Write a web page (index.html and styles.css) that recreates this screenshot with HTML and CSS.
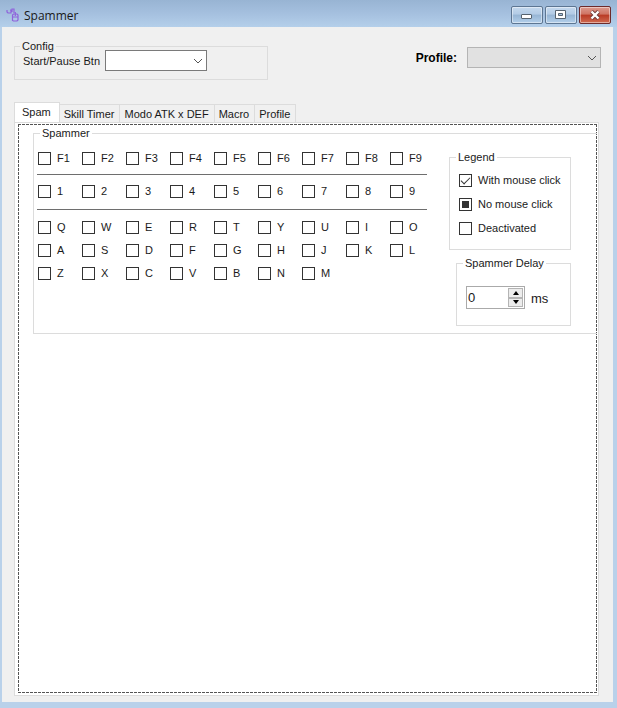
FILE: index.html
```html
<!DOCTYPE html>
<html lang="en">
<head>
    <meta charset="utf-8">
    <title>Spammer</title>
    <link rel="stylesheet" href="styles.css">
</head>
<body>
    <div class="window">
        <header class="titlebar">
            <svg class="titlebar__icon" width="14" height="14" viewBox="0 0 14 14" fill="none" stroke="#8f62dc" stroke-width="1.2">
                <path d="M1 2v2l1 1h3V2H4M6 4V1h2v4"/>
                <path d="M6.500 12.500V7l1-1h3.500l1 1v5l-1 1H7.500zM6.500 9h5.500M9.300 4v4"/>
            </svg>
            <h1>Spammer</h1>
            <button class="winbtn" aria-label="Minimize">
                <svg width="12" height="10" viewBox="0 0 12 10"><rect x="0.500" y="4.500" width="10" height="4" rx="0.500" fill="#fff" stroke="#56636f"/></svg>
            </button>
            <button class="winbtn" aria-label="Maximize">
                <svg width="12" height="10" viewBox="0 0 12 10"><path fill="#fff" stroke="#56636f" fill-rule="evenodd" d="M0.500 0.500h10v8h-10zM3.500 3.500v2h4v-2z"/></svg>
            </button>
            <button class="winbtn winbtn--close" aria-label="Close">
                <svg width="12" height="10" viewBox="0 0 12 10"><path d="M2.500 1.500l7 7M9.500 1.500l-7 7" stroke="#6b3a3a" stroke-width="4"/><path d="M2.500 1.500l7 7M9.500 1.500l-7 7" stroke="#fff" stroke-width="2.400"/></svg>
            </button>
        </header>

        <main class="client">
            <div class="top">
                <fieldset class="config">
                    <legend>Config</legend>
                    <div class="config__row">
                        <label for="start_btn">Start/Pause Btn</label>
                        <span class="combo">
                            <select id="start_btn"></select>
                            <svg width="10" height="6" viewBox="0 0 10 6"><path d="M1 1l4 4 4-4"/></svg>
                        </span>
                    </div>
                </fieldset>
                <div class="profile">
                    <label for="profile">Profile:</label>
                    <span class="combo combo--disabled">
                        <select id="profile" disabled></select>
                        <svg width="10" height="6" viewBox="0 0 10 6"><path d="M1 1l4 4 4-4"/></svg>
                    </span>
                </div>
            </div>

            <div class="tabs" role="tablist">
                <button class="tab tab--active" role="tab" aria-selected="true">Spam</button>
                <button class="tab" role="tab">Skill Timer</button>
                <button class="tab" role="tab">Modo ATK x DEF</button>
                <button class="tab" role="tab">Macro</button>
                <button class="tab" role="tab">Profile</button>
            </div>

            <section class="panel">
                <div class="page">
                    <fieldset class="spammer">
                        <legend>Spammer</legend>
                        <div class="keys">
                            <div class="keys__row">
                                <label><input type="checkbox">F1</label>
                                <label><input type="checkbox">F2</label>
                                <label><input type="checkbox">F3</label>
                                <label><input type="checkbox">F4</label>
                                <label><input type="checkbox">F5</label>
                                <label><input type="checkbox">F6</label>
                                <label><input type="checkbox">F7</label>
                                <label><input type="checkbox">F8</label>
                                <label><input type="checkbox">F9</label>
                            </div>
                            <hr>
                            <div class="keys__row">
                                <label><input type="checkbox">1</label>
                                <label><input type="checkbox">2</label>
                                <label><input type="checkbox">3</label>
                                <label><input type="checkbox">4</label>
                                <label><input type="checkbox">5</label>
                                <label><input type="checkbox">6</label>
                                <label><input type="checkbox">7</label>
                                <label><input type="checkbox">8</label>
                                <label><input type="checkbox">9</label>
                            </div>
                            <hr>
                            <div class="keys__row">
                                <label><input type="checkbox">Q</label>
                                <label><input type="checkbox">W</label>
                                <label><input type="checkbox">E</label>
                                <label><input type="checkbox">R</label>
                                <label><input type="checkbox">T</label>
                                <label><input type="checkbox">Y</label>
                                <label><input type="checkbox">U</label>
                                <label><input type="checkbox">I</label>
                                <label><input type="checkbox">O</label>
                                <label><input type="checkbox">A</label>
                                <label><input type="checkbox">S</label>
                                <label><input type="checkbox">D</label>
                                <label><input type="checkbox">F</label>
                                <label><input type="checkbox">G</label>
                                <label><input type="checkbox">H</label>
                                <label><input type="checkbox">J</label>
                                <label><input type="checkbox">K</label>
                                <label><input type="checkbox">L</label>
                                <label><input type="checkbox">Z</label>
                                <label><input type="checkbox">X</label>
                                <label><input type="checkbox">C</label>
                                <label><input type="checkbox">V</label>
                                <label><input type="checkbox">B</label>
                                <label><input type="checkbox">N</label>
                                <label><input type="checkbox">M</label>
                            </div>
                        </div>

                        <div class="side">
                            <fieldset class="help">
                                <legend>Legend</legend>
                                <label><input type="checkbox" checked>With mouse click</label>
                                <label><input type="checkbox" id="no_click">No mouse click</label>
                                <label><input type="checkbox">Deactivated</label>
                            </fieldset>
                            <fieldset class="delay">
                                <legend>Spammer Delay</legend>
                                <div class="spinner">
                                    <input type="number" id="delay" value="0" min="0">
                                    <div class="spinner__buttons">
                                        <button id="delay_up" aria-label="Increase"><svg width="6" height="4" viewBox="0 0 6 4"><path d="M0 4l3-4 3 4z"/></svg></button>
                                        <button id="delay_down" aria-label="Decrease"><svg width="6" height="4" viewBox="0 0 6 4"><path d="M0 0l3 4 3-4z"/></svg></button>
                                    </div>
                                </div>
                                <label for="delay">ms</label>
                            </fieldset>
                        </div>
                    </fieldset>
                </div>
            </section>
        </main>
    </div>

    <script>
        // third state can't be set from markup
        document.getElementById('no_click').indeterminate = true;

        var delay = document.getElementById('delay');
        document.getElementById('delay_up').addEventListener('click', function() {
            delay.stepUp();
        });
        document.getElementById('delay_down').addEventListener('click', function() {
            delay.stepDown();
        });
    </script>
</body>
</html>
```

FILE: styles.css
```css
*, ::after, ::before {
    box-sizing: border-box;
}

body {
    margin: 0;
    color: #1a1a1a;
    font-size: 11px;
    line-height: 13px;
    font-family: "Liberation Sans", Arial, sans-serif;
}

button, input, select {
    margin: 0;
    padding: 0;
    color: inherit;
    font: inherit;
    border-radius: 0;
}

.window {
    display: flex;
    flex-direction: column;
    min-height: 100vh;
    padding: 0 4px 6px 2px;
    background: #b9d1ea;
}

/* title bar */
.titlebar {
    display: flex;
    align-items: center;
    gap: 2px;
    height: 27px;
    margin: 0 -4px 0 -2px;
    padding: 3px 6px 0 6px;
    background: linear-gradient(#98b4d3, #a5c0df 50%, #b4cfea);
}

.titlebar h1 {
    flex: 1;
    margin: 0 0 0 2px;
    padding-top: 2px;
    font: 12px/16px "Open Sans", sans-serif;
}

.winbtn {
    display: flex;
    align-items: center;
    justify-content: center;
    width: 32px;
    height: 18px;
    border: 1px solid #5d7692;
    border-radius: 2px;
    background: linear-gradient(#c5d9ee, #b2cbe5 45%, #96b5d4 50%, #b3cfea);
    box-shadow: inset 0 0 0 1px rgba(255, 255, 255, .45);
}

.winbtn--close {
    border-color: #6d2a2a;
    background: linear-gradient(#dc9a8e, #cf7463 45%, #b93a24 50%, #cf6a50);
}

.client {
    flex: 1;
    display: flex;
    flex-direction: column;
    padding: 15px 14px 6px 12px;
    background: #f0f0f0;
}

/* group boxes */
fieldset {
    margin: 0;
    min-width: 0;
    border: 1px solid #dcdcdc;
    padding: 0 9px;
}

legend {
    margin-left: -3px;
    padding: 0 2px;
    line-height: 8px;
}

.top {
    display: flex;
    justify-content: space-between;
    align-items: flex-start;
}

.config {
    width: 254px;
    padding: 0 8px 8px;
}

.config__row {
    display: flex;
    align-items: center;
}

.config label {
    width: 82px;
    padding-top: 2px;
}

/* combo boxes */
.combo {
    display: grid;
    align-items: center;
    width: 102px;
}

.combo select, .combo svg {
    grid-area: 1 / 1;
}

.combo select {
    appearance: none;
    width: 100%;
    height: 21px;
    border: 1px solid #7a7a7a;
    background: #fff;
}

.combo svg {
    justify-self: end;
    margin-right: 4px;
    fill: none;
    stroke: #555;
    pointer-events: none;
}

.combo--disabled {
    width: 134px;
}

.combo--disabled select {
    border-color: #b4b4b4;
    background: #e1e1e1;
    opacity: 1;
}

.profile {
    display: flex;
    align-items: center;
    gap: 10px;
    margin: 5px -2px 0 0;
}

.profile label {
    padding-top: 2px;
    color: #000;
    font-size: 12px;
    font-weight: bold;
}

/* tabs */
.tabs {
    display: flex;
    align-items: flex-end;
    margin-top: 22px;
}

.tab {
    height: 18px;
    padding: 1px 5px 0 4px;
    border: 1px solid #dcdcdc;
    border-width: 1px 1px 0 0;
    background: #f0f0f0;
}

.tab--active {
    height: 21px;
    margin-bottom: -1px;
    padding: 0 8px 2px 7px;
    border-left-width: 1px;
    background: #fff;
}

.panel {
    flex: 1;
    display: flex;
    padding: 1px 1px 2px 3px;
    border: 1px solid #dcdcdc;
    background: #fff;
}

.page {
    --dash: #555 0 3px, transparent 3px 4px;
    flex: 1;
    padding: 5px 0 5px 15px;
    background:
        repeating-linear-gradient(90deg, var(--dash)) top / 100% 1px no-repeat,
        repeating-linear-gradient(90deg, var(--dash)) bottom / 100% 1px no-repeat,
        repeating-linear-gradient(var(--dash)) left / 1px 100% no-repeat,
        repeating-linear-gradient(var(--dash)) right / 1px 100% no-repeat;
}

.spammer {
    display: flex;
    gap: 22px;
    padding: 0 0 7px 3px;
    border-right: 0;
}

.spammer > legend {
    margin-left: 3px;
}

/* check boxes */
input[type="checkbox"] {
    appearance: none;
    display: grid;
    place-items: center;
    width: 13px;
    height: 13px;
    border: 1px solid #333;
    background: #fff;
}

input[type="checkbox"]:checked::before {
    content: "";
    width: 9px;
    height: 5px;
    margin-top: -3px;
    border: solid #333;
    border-width: 0 0 1px 1px;
    transform: rotate(-45deg);
}

input[type="checkbox"]:indeterminate::before {
    content: "";
    width: 7px;
    height: 7px;
    background: #333;
}

.keys {
    width: 390px;
    padding-top: 15px;
}

.keys__row {
    display: grid;
    grid-template-columns: repeat(9, 44px);
    row-gap: 10px;
    padding-left: 1px;
}

.keys__row label, .help label {
    display: flex;
    align-items: center;
    gap: 6px;
}

.keys hr {
    height: 1px;
    margin: 9px 0 10px;
    border: 0;
    background: #6e6e6e;
}

.keys hr ~ hr {
    margin: 11px 0;
}

.side {
    display: flex;
    flex-direction: column;
    align-items: flex-end;
    gap: 9px;
    width: 122px;
    padding-top: 16px;
}

.help {
    display: flex;
    flex-direction: column;
    gap: 11px;
    width: 100%;
    padding: 13px 0 14px 9px;
}

.delay {
    display: flex;
    align-items: center;
    gap: 6px;
    width: 115px;
    padding: 19px 9px 16px;
}

.delay label {
    padding-top: 1px;
    font-size: 13px;
}

.spinner {
    display: flex;
    width: 59px;
    height: 23px;
    padding: 1px;
    border: 1px solid #aaa;
    background: #fff;
}

.spinner input {
    appearance: textfield;
    flex: 1;
    min-width: 0;
    border: 0;
    outline: none;
    background: none;
    font-size: 13px;
}

.spinner__buttons {
    display: flex;
    flex-direction: column;
    width: 15px;
}

.spinner__buttons button {
    flex: 1;
    display: flex;
    align-items: center;
    justify-content: center;
    border: 1px solid #b4b4b4;
    background: #ececec;
}
```
